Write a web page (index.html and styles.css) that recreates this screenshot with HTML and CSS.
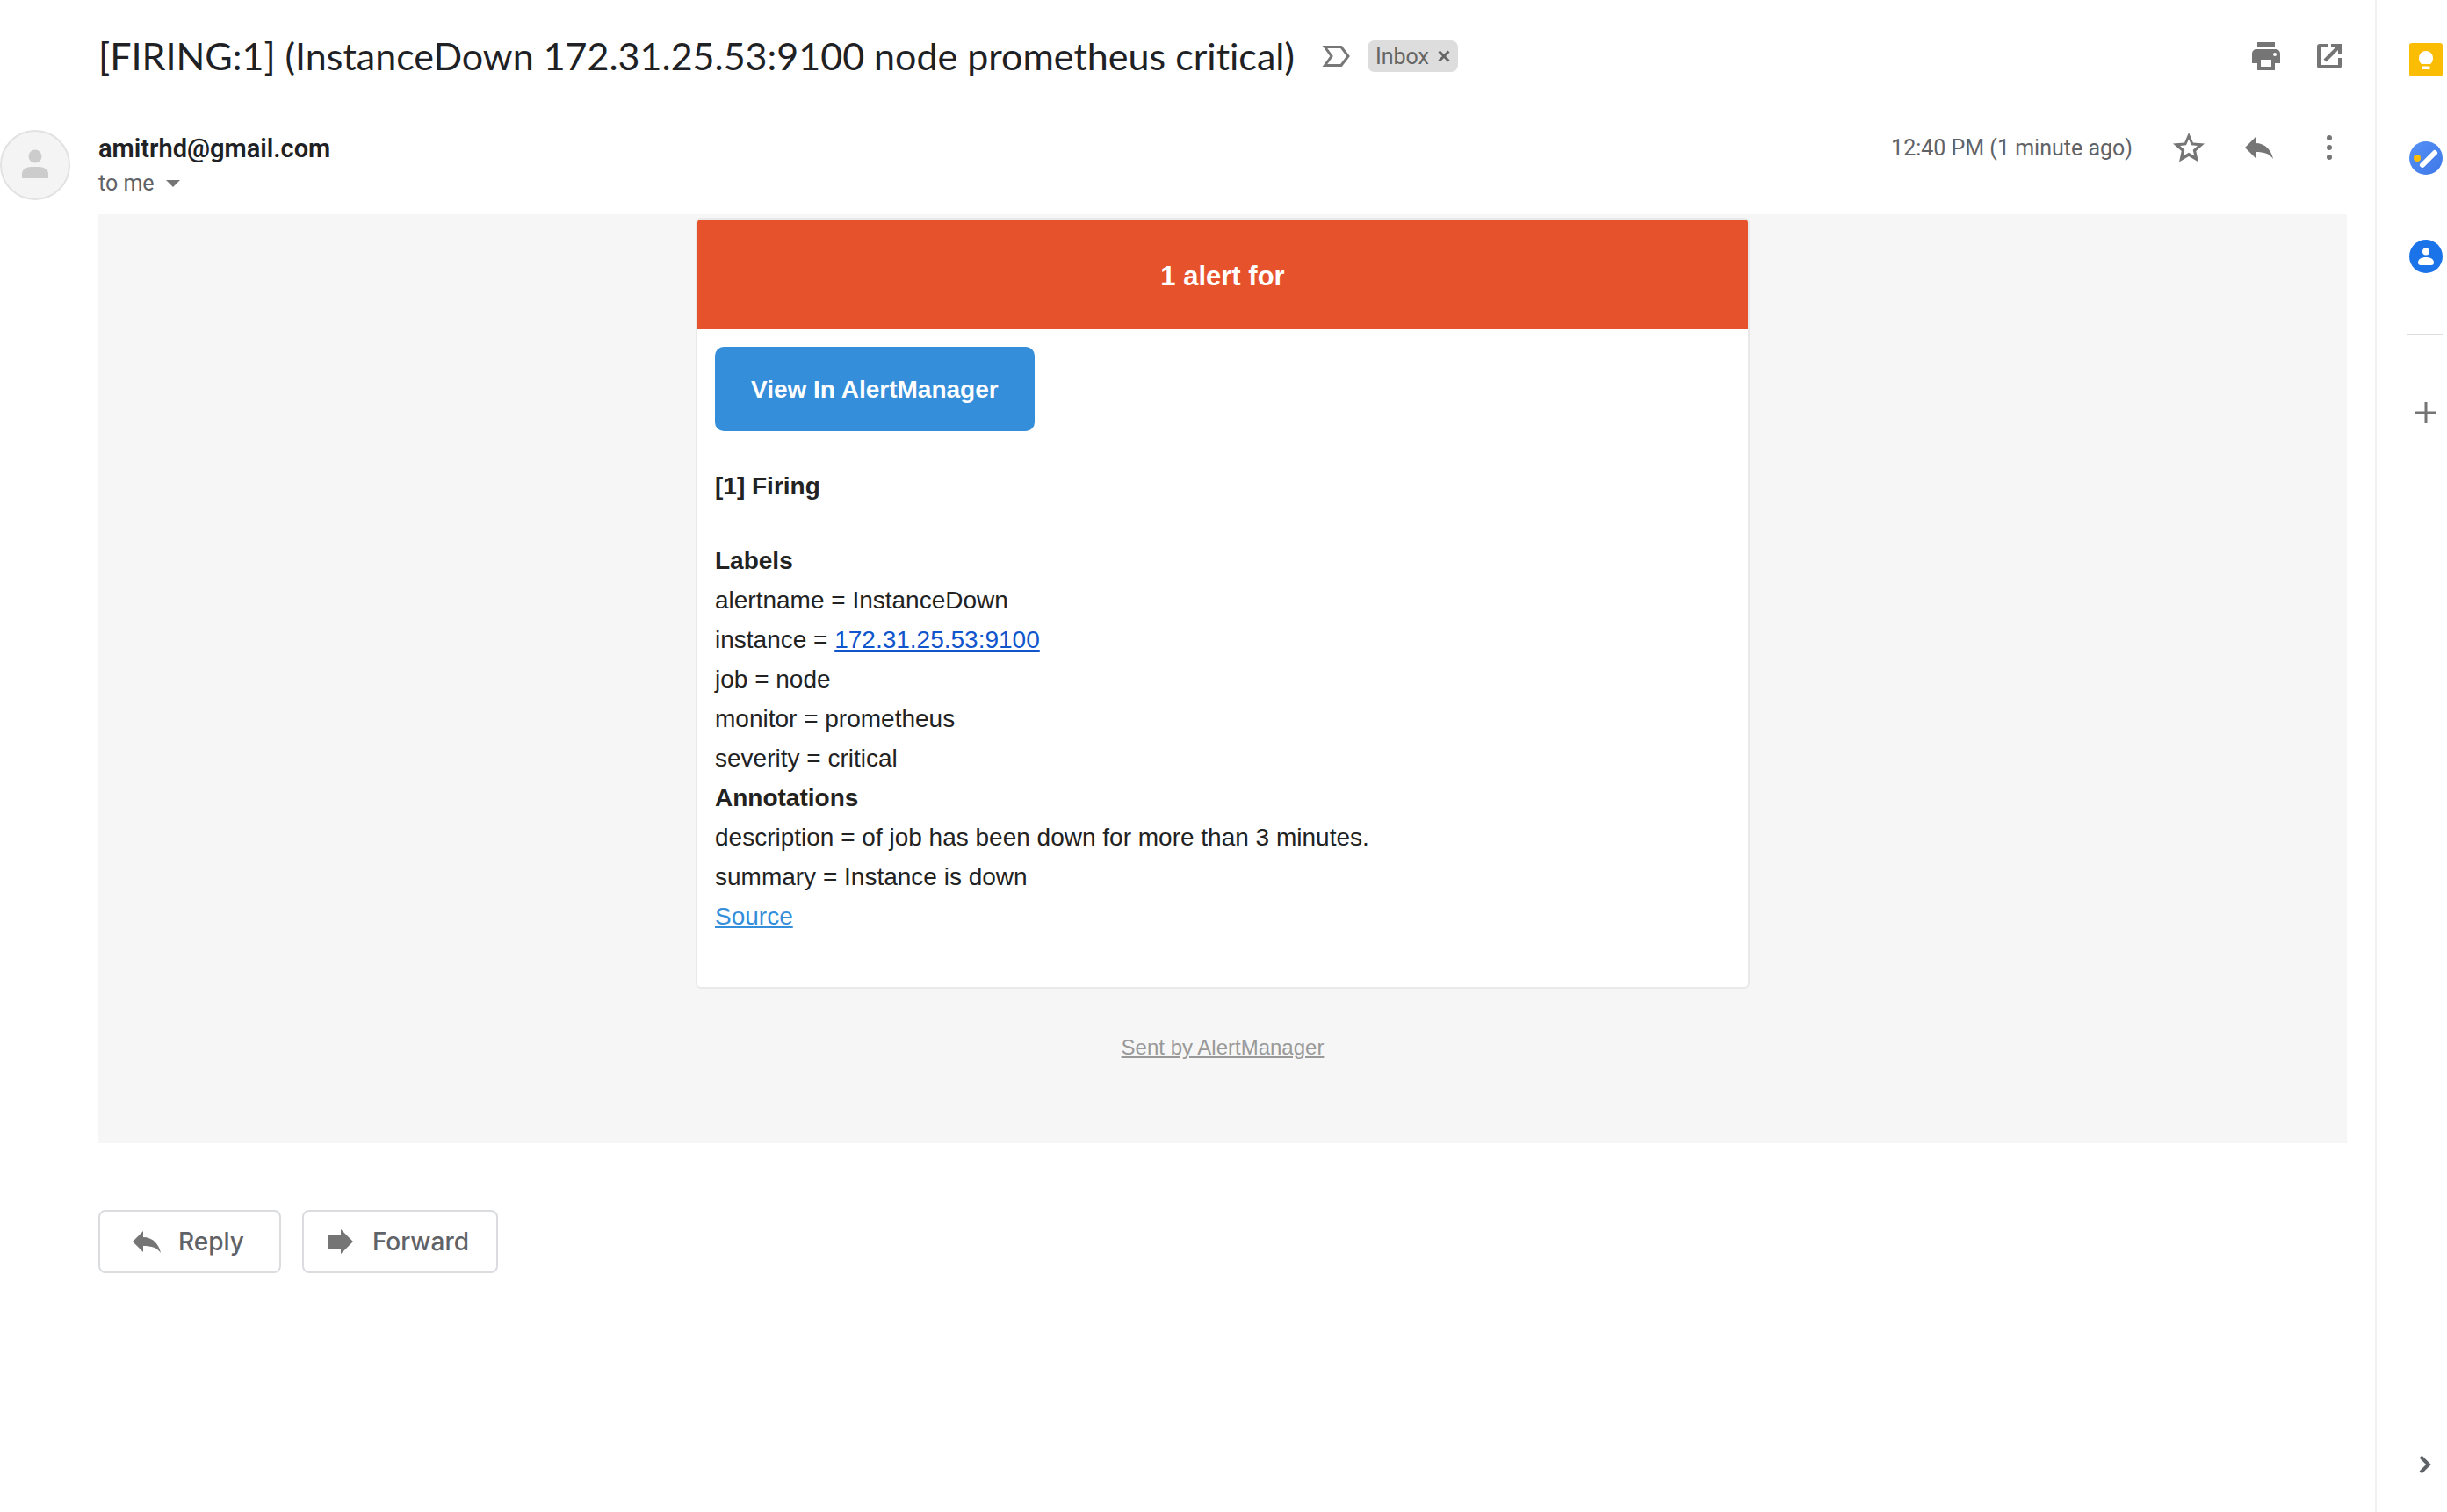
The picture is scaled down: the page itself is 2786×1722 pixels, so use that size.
FILE: index.html
```html
<!DOCTYPE html>
<html lang="en">
<head>
<meta charset="utf-8">
<title>[FIRING:1] (InstanceDown 172.31.25.53:9100 node prometheus critical)</title>
<link rel="stylesheet" href="styles.css">
</head>
<body>
<main class="thread">
  <header class="subject">
    <h1 class="subject-title">[FIRING:1] (InstanceDown 172.31.25.53:9100 node prometheus critical)</h1>
    <button class="icon-button marker" aria-label="Mark as important">
      <svg width="32" height="24" viewBox="0 0 32 24"><path d="M3.500 1.500H22L30 12L22 22.500H3.500L11 12Z" fill="none" stroke="#777" stroke-width="3"/></svg>
    </button>
    <span class="chip">Inbox
      <button class="icon-button" aria-label="Remove Inbox label">
        <svg width="14" height="14" viewBox="0 0 14 14"><path d="M1.500 1.500L12.500 12.500M12.500 1.500L1.500 12.500" stroke="#666" stroke-width="3"/></svg>
      </button>
    </span>
    <div class="subject-actions">
      <button class="icon-button" aria-label="Print">
        <svg width="32" height="32" viewBox="0 0 32 32"><path fill="#757575" fill-rule="evenodd" d="M6 0H26V6H6ZM5 8H27A5 5 0 0 1 32 13V24H26V32H6V24H0V13A5 5 0 0 1 5 8ZM10 20V28H22V20ZM26 12A2 2 0 1 0 26 16A2 2 0 0 0 26 12Z"/></svg>
      </button>
      <button class="icon-button" aria-label="Open in new window">
        <svg width="28" height="28" viewBox="0 0 28 28"><path fill="#757575" d="M12 0V4H4V24H24V16H28V25A3 3 0 0 1 25 28H3A3 3 0 0 1 0 25V3A3 3 0 0 1 3 0ZM16 0H28V12H24V7L10.500 20.500L7.500 17.500L21 4H16Z"/></svg>
      </button>
    </div>
  </header>

  <section class="message">
    <svg class="avatar" width="80" height="80" viewBox="0 0 80 80"><circle cx="40" cy="40" r="39" fill="#f4f4f4" stroke="#e2e2e2" stroke-width="2"/><circle cx="40" cy="30" r="7.500" fill="#ccc"/><path d="M25 55V50C25 45 30 42 36 42H44C50 42 55 45 55 50V55Z" fill="#ccc"/></svg>
    <div class="message-main">
      <header class="message-header">
        <div class="sender">
          <span class="sender-name">amitrhd@gmail.com</span>
          <button class="recipients">to me
            <svg width="16" height="8" viewBox="0 0 16 8"><path d="M0 0H16L8 8Z" fill="#757575"/></svg>
          </button>
        </div>
        <div class="message-actions">
          <time class="sent">12:40 PM (1 minute ago)</time>
          <button class="icon-button" aria-label="Star">
            <svg width="36" height="34" viewBox="0 0 36 34"><path fill="#757575" fill-rule="evenodd" d="M18 0L22.900 11.500L36 12.500L26.300 21L29 33.500L18 27L7 33.500L9.700 21L0 12.500L13.100 11.500ZM18 7.500L15 14.300L8 15L13.300 19.700L11.700 26.500L18 22.800L24.300 26.500L22.700 19.700L28 15L21 14.300Z"/></svg>
          </button>
          <button class="icon-button" aria-label="Reply">
            <svg width="32" height="25" viewBox="0 0 32 25"><path fill="#757575" d="M12 0V7C23 7 30 15 32 25C28 19 22 17 12 17V24L0 12Z"/></svg>
          </button>
          <button class="icon-button" aria-label="More">
            <svg width="36" height="28" viewBox="0 0 36 28"><g fill="#757575"><circle cx="18" cy="3" r="3"/><circle cx="18" cy="14" r="3"/><circle cx="18" cy="25" r="3"/></g></svg>
          </button>
        </div>
      </header>

      <div class="mail">
        <article class="alert-card">
          <h2 class="alert-title">1 alert for</h2>
          <div class="alert-body">
            <a class="cta" href="#alertmanager">View In AlertManager</a>
            <p class="firing"><strong>[1] Firing</strong></p>
            <p class="details">
              <strong>Labels</strong><br>
              alertname = InstanceDown<br>
              instance = <a class="address" href="#instance">172.31.25.53:9100</a><br>
              job = node<br>
              monitor = prometheus<br>
              severity = critical<br>
              <strong>Annotations</strong><br>
              description = of job has been down for more than 3 minutes.<br>
              summary = Instance is down<br>
              <a class="source" href="#source">Source</a>
            </p>
          </div>
        </article>
        <a class="sent-by" href="#sent-by">Sent by AlertManager</a>
      </div>

      <div class="replies">
        <button class="reply-button reply">
          <svg width="32" height="25" viewBox="0 0 32 25"><path fill="#757575" d="M12 0V7C23 7 30 15 32 25C28 19 22 17 12 17V24L0 12Z"/></svg>
          Reply
        </button>
        <button class="reply-button forward">
          <svg width="28" height="28" viewBox="0 0 28 28"><path fill="#757575" d="M0 6H14V0L28 14L14 28V22H0Z"/></svg>
          Forward
        </button>
      </div>
    </div>
  </section>
</main>

<aside class="side-panel">
  <button class="icon-button" aria-label="Keep">
    <svg width="38" height="38" viewBox="0 0 38 38"><rect width="38" height="38" rx="3" fill="#fbbc04"/><path fill="#fff" d="M14 24C12 22.500 11 20 11 17A8 8 0 0 1 27 17C27 20 26 22.500 24 24ZM14.500 26.500H23.500V30H14.500Z"/></svg>
  </button>
  <button class="icon-button" aria-label="Tasks">
    <svg width="38" height="38" viewBox="0 0 38 38"><defs><linearGradient id="tasks-blue" x1="0" y1="0" x2="1" y2="1"><stop offset="0" stop-color="#5491f5"/><stop offset="1" stop-color="#3f78e8"/></linearGradient></defs><circle cx="19" cy="19" r="19" fill="url(#tasks-blue)"/><path d="M15 28L29 14" stroke="#3367d6" stroke-opacity=".5" stroke-width="6" stroke-linecap="round"/><path d="M15 27L29 13" stroke="#fff" stroke-width="6" stroke-linecap="round"/><circle cx="9" cy="19" r="4" fill="#fbbc04"/></svg>
  </button>
  <button class="icon-button" aria-label="Contacts">
    <svg width="38" height="38" viewBox="0 0 38 38"><circle cx="19" cy="19" r="19" fill="#1a73e8"/><g fill="#fff"><circle cx="19" cy="13.500" r="4"/><path d="M10 26C10 22 14 20 19 20S28 22 28 26C28 28 27 29 25 29H13C11 29 10 28 10 26Z"/></g></svg>
  </button>
  <hr class="divider">
  <button class="icon-button" aria-label="Get add-ons">
    <svg width="38" height="24" viewBox="0 0 38 24"><path d="M7 12H31M19 0V24" stroke="#757575" stroke-width="3"/></svg>
  </button>
  <button class="icon-button collapse" aria-label="Hide side panel">
    <svg width="38" height="20" viewBox="0 0 38 20"><path d="M13 1L22 10L13 19" fill="none" stroke="#5f6368" stroke-width="4"/></svg>
  </button>
</aside>
</body>
</html>
```
FILE: styles.css
```css
* {
  box-sizing: border-box;
}

body {
  display: flex;
  min-height: 100vh;
  margin: 0;
  background: #fff;
  color: #202124;
  font-family: Roboto, "Liberation Sans", sans-serif;
}

button {
  border: 0;
  background: none;
  padding: 0;
  font: inherit;
  color: inherit;
  cursor: pointer;
}

svg {
  display: block;
  flex: none;
}

h1,
h2,
p {
  margin: 0;
}

.thread {
  flex: 1;
  min-width: 0;
  padding: 36px 32px 80px 0;
}

.subject {
  display: flex;
  align-items: center;
  min-height: 56px;
  margin-bottom: 56px;
  padding-left: 112px;
}

.subject-title {
  font: 400 43px/56px Lato, Roboto, sans-serif;
  font-variant-ligatures: none;
}

.marker {
  margin: 0 20px 0 31px;
}

.chip {
  display: flex;
  align-items: center;
  gap: 10px;
  height: 36px;
  padding: 0 9px;
  border-radius: 8px;
  background: #ddd;
  color: #666;
  font-size: 25px;
}

.subject-actions {
  display: flex;
  align-items: center;
  gap: 42px;
  margin-left: auto;
  padding-right: 6px;
}

.message {
  display: grid;
  grid-template-columns: 112px minmax(0, 1fr);
}

.message-header {
  display: flex;
  justify-content: space-between;
  margin-bottom: 15px;
}

.sender {
  display: flex;
  flex-direction: column;
  align-items: flex-start;
  padding-top: 1px;
  line-height: 40px;
}

.sender-name {
  font-size: 29px;
  font-weight: 600;
}

.recipients {
  display: flex;
  align-items: center;
  gap: 13px;
  color: #5f6368;
  font-size: 25px;
}

.message-actions {
  display: flex;
  align-items: center;
  gap: 46px;
  height: 40px;
  padding-right: 2px;
}

.sent {
  color: #5f6368;
  font-size: 25px;
}

.mail {
  display: flex;
  flex-direction: column;
  align-items: center;
  padding: 4px 20px 93px;
  background: #f6f6f6;
  font-family: "Liberation Sans", sans-serif;
}

.alert-card {
  width: 100%;
  max-width: 1200px;
  border: 2px solid #e9e9e9;
  border-radius: 6px;
  background: #fff;
  color: #222;
  overflow: hidden;
}

.alert-title {
  padding: 42px 40px 38px;
  background: #e6522c;
  color: #fff;
  font-size: 31px;
  line-height: 45px;
  text-align: center;
}

.alert-body {
  display: flex;
  flex-direction: column;
  align-items: flex-start;
  gap: 40px;
  padding: 20px 20px 58px;
  font-size: 28px;
  line-height: 45px;
}

.cta {
  padding: 26px 41px 25px;
  border-radius: 10px;
  background: #348eda;
  color: #fff;
  font-weight: 700;
  text-decoration: none;
}

.address {
  color: #15c;
}

.source {
  color: #348eda;
}

.sent-by {
  margin-top: 51px;
  color: #999;
  font-size: 24px;
  line-height: 32px;
}

.replies {
  display: flex;
  gap: 24px;
  margin-top: 76px;
}

.reply-button {
  display: flex;
  align-items: center;
  justify-content: center;
  height: 72px;
  border: 2px solid #dadce0;
  border-radius: 8px;
  color: #5f6368;
  font: 500 28px/36px Inter, Roboto, sans-serif;
}

.reply {
  gap: 20px;
  padding: 0 40px 0 37px;
}

.forward {
  gap: 22px;
  padding: 0 31px 0 28px;
}

.side-panel {
  display: flex;
  flex-direction: column;
  align-items: flex-start;
  gap: 74px;
  width: 82px;
  padding: 49px 0 44px 37px;
  border-left: 2px solid #f1f1f1;
}

.divider {
  width: 40px;
  height: 2px;
  margin: -5px 0 2px -2px;
  border: 0;
  background: #dadce0;
}

.collapse {
  margin-top: auto;
}
```
